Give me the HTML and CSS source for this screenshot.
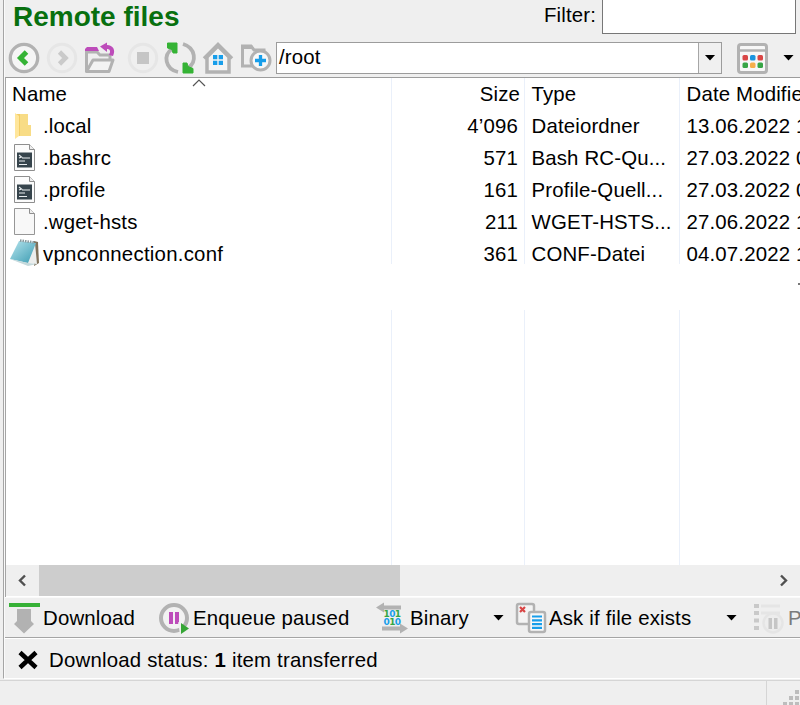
FILE: index.html
```html
<!DOCTYPE html>
<html lang="en">
<head>
<meta charset="utf-8">
<title>Remote files</title>
<link rel="stylesheet" href="styles.css">
</head>
<body>
<main class="pane">
  <header class="titlebar">
    <h1>Remote files</h1>
    <label class="filter"><span>Filter:</span><span class="filter-box"></span></label>
  </header>

  <nav class="toolbar">
    <svg class="ico back" viewBox="0 0 32 32"><circle cx="16" cy="16" r="13.7" fill="#f5f5f5" stroke="#b2b2b2" stroke-width="3.3"/><path d="M18.500 10l-6 6 6 6" fill="none" stroke="#35b335" stroke-width="5"/></svg>
    <svg class="ico fwd" viewBox="0 0 32 32"><circle cx="16" cy="16" r="13.7" fill="#efefef" stroke="#e6e6e6" stroke-width="3"/><path d="M13.500 10l6 6-6 6" fill="none" stroke="#cacaca" stroke-width="4.6"/></svg>
    <svg class="ico up" viewBox="0 0 32 32"><path d="M3.500 30V10H14l3 3h10v6" fill="none" stroke="#b2b2b2" stroke-width="3"/><path d="M3.500 29.500L10 18h20l-4 11.500z" fill="#f3f3f3" stroke="#b2b2b2" stroke-width="3" stroke-linejoin="round"/><path d="M2 9V7l2-2h10l2 4z" fill="#bd4cba"/><path d="M17 4.500l7-4v2.500c6 0 9 5 6 11l-4-1c2-4 1-6-2-6v3z" fill="#bd4cba"/></svg>
    <svg class="ico stop" viewBox="0 0 32 32"><circle cx="16" cy="16" r="13.7" fill="#efefef" stroke="#e6e6e6" stroke-width="3"/><path d="M10 10h12v12H10z" fill="#c5c5c5"/></svg>
    <svg class="ico refresh" viewBox="0 0 32 32"><path d="M8 7C-1 13 1 27 14 30M19 2C32 6 33 20 24 26" fill="none" stroke="#b2b2b2" stroke-width="3.800"/><path d="M3.500 1h9.500v10h-4l-1-3.500-4.500-1.500zM29 31H19V21h4l1 3.500 5 2z" fill="#35b335" stroke="#35b335" stroke-linejoin="round"/></svg>
    <svg class="ico home" viewBox="0 0 32 32"><path d="M5 15L16 4l11 11v15H5z" fill="#f4f4f4" stroke="#b2b2b2" stroke-width="3.500"/><path d="M2 16.500L16 2.500l14 14" fill="none" stroke="#b2b2b2" stroke-width="3.500"/><path d="M11 13h4.300v4.300H11zM16.700 13H21v4.300h-4.300zM11 18.700h4.300V23H11zM16.700 18.700H21V23h-4.300z" fill="#189eea"/></svg>
    <svg class="ico newdir" viewBox="0 0 32 32"><path d="M13 24H2.500V4H11l3 4h10v5" fill="none" stroke="#b2b2b2" stroke-width="3"/><path d="M2 3h10l2 4H2z" fill="#b2b2b2"/><circle cx="20.500" cy="18.500" r="9.500" fill="#f8f8f8" stroke="#b2b2b2" stroke-width="3"/><path d="M20.500 13v11M15 18.500h11" stroke="#189eea" stroke-width="3.300"/></svg>
    <div class="combo"><span>/root</span><div class="combo-btn"><i class="caret"></i></div></div>
    <svg class="ico view" viewBox="0 0 32 32"><rect x="2.500" y="2.500" width="28" height="28" rx="2.500" fill="#f7f7f7" stroke="#b2b2b2" stroke-width="3"/><path d="M3 8.500h27" stroke="#b2b2b2" stroke-width="2.500"/><g><rect x="6.500" y="13" width="5.500" height="5.500" rx="1.500" fill="#d94646"/><rect x="14" y="13" width="5.500" height="5.500" rx="1.500" fill="#1b94e0"/><rect x="21.500" y="13" width="5.500" height="5.500" rx="1.500" fill="#d94646"/><rect x="6.500" y="20.500" width="5.500" height="5.500" rx="1.500" fill="#37a546"/><rect x="14" y="20.500" width="5.500" height="5.500" rx="1.500" fill="#f5ae4c"/><rect x="21.500" y="20.500" width="5.500" height="5.500" rx="1.500" fill="#37a546"/></g></svg>
    <i class="caret view-caret"></i>
  </nav>

  <section class="list">
    <div class="row head"><div class="name">Name<svg class="sort" viewBox="0 0 14 8"><path d="M1 7l6-6 6 6" fill="none" stroke="#555" stroke-width="1.200"/></svg></div><div class="size">Size</div><div>Type</div><div>Date Modifie</div></div>
    <div class="row"><div class="name"><svg class="fico" viewBox="0 0 32 32"><path d="M9 4h13v11h3v11H9z" fill="#f3ce68"/><path d="M9 3l4 3v20l-4 3z" fill="#ffe69b"/><path d="M14 4h8v11h3v11H14z" fill="#f8dc86"/></svg>.local</div><div class="size">4’096</div><div>Dateiordner</div><div>13.06.2022 1</div></div>
    <div class="row"><div class="name"><svg class="fico" viewBox="0 0 32 32"><path d="M8.500 2.500h15l5 5v21h-20z" fill="#fbfbfb" stroke="#8e8e8e"/><path d="M23.500 2.500v5h5" fill="#eee" stroke="#8e8e8e"/><path d="M11 10.500h15v15H11z" fill="#36444c"/><path d="M13 13l2.500 2-2.500 1M16 16h8M13 19h6M13 22.500h8" stroke="#e9edef" stroke-width="1.200" fill="none"/></svg>.bashrc</div><div class="size">571</div><div>Bash RC-Qu...</div><div>27.03.2022 0</div></div>
    <div class="row"><div class="name"><svg class="fico" viewBox="0 0 32 32"><path d="M8.500 2.500h15l5 5v21h-20z" fill="#fbfbfb" stroke="#8e8e8e"/><path d="M23.500 2.500v5h5" fill="#eee" stroke="#8e8e8e"/><path d="M11 10.500h15v15H11z" fill="#36444c"/><path d="M13 13l2.500 2-2.500 1M16 16h8M13 19h6M13 22.500h8" stroke="#e9edef" stroke-width="1.200" fill="none"/></svg>.profile</div><div class="size">161</div><div>Profile-Quell...</div><div>27.03.2022 0</div></div>
    <div class="row"><div class="name"><svg class="fico" viewBox="0 0 32 32"><path d="M8.500 2.500h15l5 5v21h-20z" fill="#f8f8f8" stroke="#969696"/><path d="M23.500 2.500v5h5" fill="#eee" stroke="#8e8e8e"/></svg>.wget-hsts</div><div class="size">211</div><div>WGET-HSTS...</div><div>27.06.2022 1</div></div>
    <div class="row"><div class="name"><svg class="fico" viewBox="0 0 32 32"><defs><linearGradient id="pad" x1="0" y1="0" x2="1" y2="1"><stop offset="0" stop-color="#b7e5ee"/><stop offset="1" stop-color="#3a9bb1"/></linearGradient></defs><path d="M28 3l4 1 1 21-5 3z" fill="#80715a"/><path d="M29 5l2 21-13-1z" fill="#eceeed"/><path d="M13 3l17 2-8 20-18-4z" fill="url(#pad)"/><path d="M4 21l18 4 9 1-9 2z" fill="#c5d9dc"/><path d="M14 2.500l15 2" stroke="#87999d" stroke-width="2.500" stroke-dasharray="1.500 1"/></svg><span class="wide">vpnconnection.conf</span></div><div class="size">361</div><div>CONF-Datei</div><div>04.07.2022 1</div></div>
    <div class="gap"><i></i></div>
    <div class="row filler"><div></div><div></div><div></div><div></div></div>
    <div class="scroll">
      <svg class="arr" viewBox="0 0 32 31"><path d="M18.500 10.500l-5 5 5 5" fill="none" stroke="#505050" stroke-width="2.400"/></svg>
      <div class="track"><div class="thumb"></div></div>
      <svg class="arr" viewBox="0 0 32 31"><path d="M13.500 10.500l5 5-5 5" fill="none" stroke="#505050" stroke-width="2.400"/></svg>
    </div>
  </section>

  <section class="actions">
    <svg class="ico dl" viewBox="0 0 32 32"><path d="M1 1h31v4H1z" fill="#36b136"/><path d="M9 7h14v12l3 3-10 9.500L6 22l3-3z" fill="#b2b2b2"/></svg>
    <span class="a1">Download</span>
    <svg class="ico enq" viewBox="0 0 32 32"><circle cx="16" cy="16" r="13" fill="#f2f2f2" stroke="#b2b2b2" stroke-width="4"/><path d="M11 10h4v12h-4zM17 10h4v12h-4z" fill="#bd4cba"/><path d="M20 20l12 7-10 5z" fill="#efefef"/><path d="M23 21l8 5.500-8 5.500z" fill="#35a535"/></svg>
    <span class="a2">Enqueue paused</span>
    <svg class="ico bin" viewBox="0 0 32 32"><path d="M0 5.500L8 .5v3h17v4H8v3zM32 26.500l-8-5v3H6v4h18v3z" fill="#b2b2b2"/><g class="bits"><text x="7.500" y="15" fill="#35a545">1<tspan fill="#189eea">0</tspan>1</text><text x="7.500" y="22.500" fill="#189eea">0<tspan fill="#35a545">1</tspan>0</text></g></svg>
    <span class="a3">Binary</span><i class="caret"></i>
    <svg class="ico ask" viewBox="0 0 32 32"><rect x="2" y="2" width="17" height="20" rx="2" fill="#f4f4f4" stroke="#b2b2b2" stroke-width="2.500"/><path d="M5 5l5 5m0-5l-5 5" stroke="#d94646" stroke-width="2.200"/><rect x="14" y="10" width="16" height="20" rx="2" fill="#f8f8f8" stroke="#b2b2b2" stroke-width="2.500"/><path d="M17 14.500h10M17 18.300h10M17 22.100h10M17 25.900h10" stroke="#189eea" stroke-width="2.200"/></svg>
    <span class="a4">Ask if file exists</span><i class="caret"></i>
    <svg class="ico queue" viewBox="0 0 32 32"><path d="M1 4h5M1 11h5M1 18.500h5M1 26h5" stroke="#c9c9c9" stroke-width="4"/><path d="M8 4h19M8 11h19" stroke="#e5e5e5" stroke-width="3"/><circle cx="20" cy="21" r="9.500" fill="#ededed" stroke="#e5e5e5" stroke-width="2.500"/><path d="M15.500 16h3.500v11h-3.500zM21 16h3.500v11H21z" fill="#c6c6c6"/></svg>
    <span class="a5">P</span>
  </section>

  <section class="status"><svg viewBox="0 0 20 18"><path d="M2 1.500l16 15M18 1.500l-16 15" stroke="#000" stroke-width="4.500"/></svg><span>Download status: <b>1</b> item transferred</span></section>
</main>
<footer><div class="grip"><svg viewBox="0 0 20 16"><path d="M12 0h4v4h-4zM6 6h4v4H6zM12 6h4v4h-4zM0 12h4v4H0zM6 12h4v4H6zM12 12h4v4h-4z" fill="#bdbdbd"/></svg></div></footer>
</body>
</html>
```
FILE: styles.css
```css
* { box-sizing: border-box; }
body {
  margin: 0;
  width: 800px;
  height: 705px;
  overflow: hidden;
  background: #efefef;
  color: #000;
  font: 20.4px/33px "Liberation Sans", Arial, sans-serif;
  letter-spacing: .16px;
  white-space: nowrap;
}
svg { display: block; flex: none; overflow: visible; }
.pane {
  margin-left: 3px;
  height: 679px;
  border-left: 1px solid #a5a5a5;
  border-bottom: 1px solid #fff;
  box-shadow: inset 1px 0 #fafafa;
  padding-left: 1px;
  overflow: hidden;
}
.titlebar { display: flex; justify-content: space-between; height: 38px; padding: 0 4px 0 8px; }
h1 { margin: 0; color: #08700f; font-size: 28px; line-height: 33px; letter-spacing: 0; }
.filter { display: flex; gap: 6px; line-height: 31px; }
.filter-box { width: 194px; height: 34px; background: #fff; border: 1px solid #777; border-top: 0; }
.toolbar { display: flex; align-items: center; height: 39px; padding-left: 3px; }
.ico { width: 32px; height: 32px; }
.fwd { margin-left: 6px; }
.up { margin-left: 5px; }
.stop { margin-left: 12px; }
.refresh { margin-left: 5px; }
.home, .newdir { margin-left: 6px; }
.combo {
  display: flex;
  justify-content: space-between;
  width: 446px;
  height: 32px;
  margin-left: 4px;
  padding-left: 2px;
  background: #fff;
  border: 1px solid #9c9c9c;
  line-height: 29px;
}
.combo-btn { display: flex; align-items: center; justify-content: center; width: 23px; background: #f0f0f0; border-left: 1px solid #a6a6a6; }
.caret { flex: none; width: 11px; height: 6px; background: #000; clip-path: polygon(0 0, 100% 0, 50% 100%); }
.view { margin-left: 14px; }
.view-caret { margin-left: 15px; }
.list { height: 520px; background: #fff; border-top: 1px solid #9c9c9c; border-left: 1px solid #a5a5a5; overflow: hidden; }
.row { display: grid; grid-template-columns: 386px 133px 155px 120px; height: 32px; overflow: hidden; }
.row > div { border-right: 1px solid #eaf0fa; padding-left: 6.500px; overflow: hidden; }
.row > div:last-child { border-right: 0; }
.row > .size { padding-right: 6px; text-align: right; }
.head > .size { padding-right: 4px; }
.row > .name { display: flex; padding-left: 0; }
.head > .name { position: relative; padding-left: 6px; }
.fico { width: 32px; height: 32px; margin-right: 5px; }
.wide { letter-spacing: .25px; }
.sort { position: absolute; left: 186px; top: 1px; width: 14px; height: 8px; }
.gap { position: relative; display: flex; justify-content: flex-end; height: 46px; margin: -6px 0 0 240px; background: #fff; }
.gap i { width: 2px; height: 2px; margin-top: 19px; background: #777; }
.filler { height: 255px; }
.scroll { display: flex; height: 31px; background: #efefef; }
.arr { width: 33px; height: 31px; }
.track { flex: 1; }
.thumb { width: 361px; height: 31px; background: #cdcdcd; }
.actions { display: flex; align-items: center; height: 41px; padding-left: 3px; line-height: 36px; background: #efefef; border-top: 1px solid #fafafa; border-bottom: 1px solid #a5a5a5; }
.actions > * { flex: none; }
.actions > span { padding-top: 1px; }
.a1 { width: 118px; padding-left: 3px; }
.a2 { width: 186px; padding-left: 3px; }
.a3 { width: 85px; padding-left: 2px; }
.actions .ask { margin-left: 11px; }
.a4 { width: 179px; padding-left: 2px; }
.queue { margin-left: 16px; }
.a5 { padding-left: 3px; color: #7b7b7b; }
.bits { font: bold 9px "DejaVu Sans", sans-serif; letter-spacing: -.6px; }
.status { display: flex; align-items: center; height: 41px; padding: 2px 0 0 13px; border-top: 1px solid #fff; letter-spacing: .2px; }
.status svg { width: 20px; height: 18px; margin-right: 11px; }
footer { display: flex; justify-content: flex-end; height: 25px; margin-top: 1px; border-top: 1px solid #d5d5d5; }
.grip { width: 34px; padding: 9px 0 0 16px; border-left: 1px solid #d5d5d5; }
.grip svg { width: 20px; height: 16px; }
```
